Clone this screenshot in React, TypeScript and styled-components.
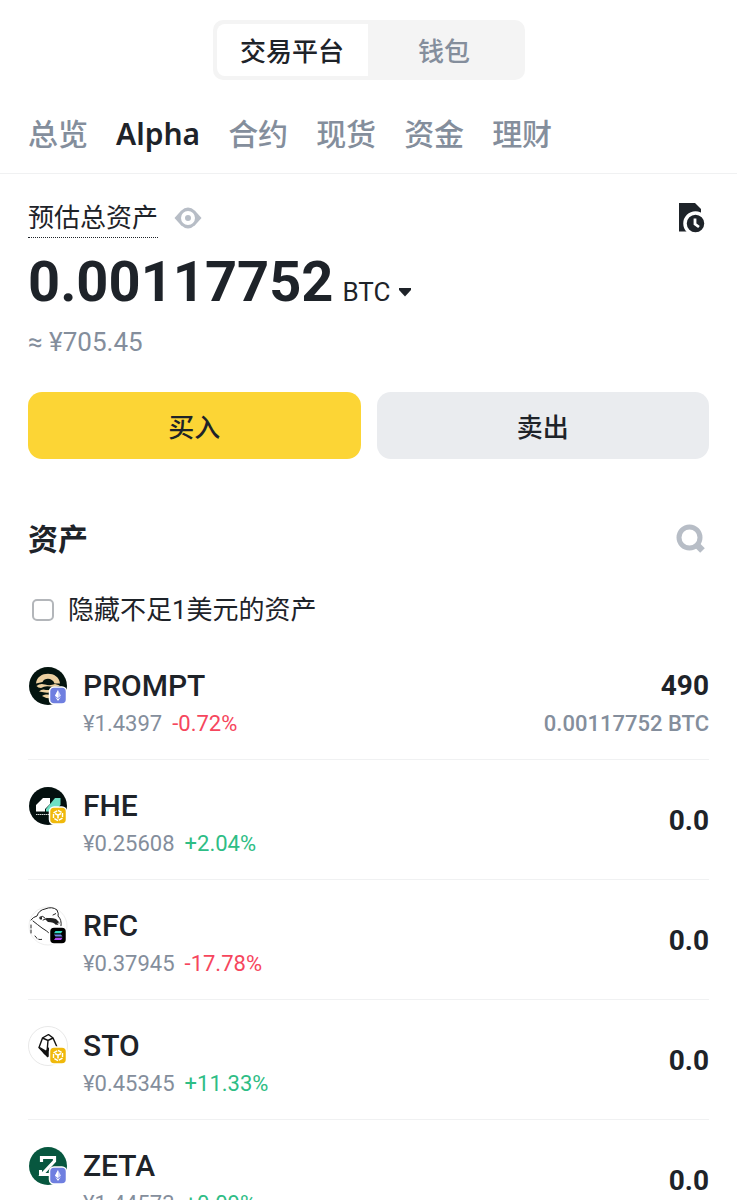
import React from "react";
import styled, { createGlobalStyle } from "styled-components";

const latin = `Roboto, "Noto Sans CJK SC", sans-serif`;
const han = `"Noto Sans CJK SC", sans-serif`;

const color = {
  ink: "#1e2329",
  muted: "#848e9c",
  faint: "#b7bdc6",
  line: "#f0f1f2",
  up: "#2ebd85",
  down: "#f6465d",
};

const GlobalStyle = createGlobalStyle`
  *, *::before, *::after { box-sizing: border-box; }
  body { margin: 0; background: #fff; color: ${color.ink}; font-family: ${latin}; }
  button { border: 0; padding: 0; background: none; color: inherit; font: inherit; cursor: pointer; }
  h1, h2, h3, p, ul { margin: 0; padding: 0; }
  svg { display: block; }
`;

const Page = styled.div`
  height: 100vh;
  overflow-x: hidden;
  overflow-y: auto;
  scrollbar-width: none;
  padding-top: 20px;
`;

const Segments = styled.div`
  display: flex;
  width: 312px;
  height: 60px;
  margin: 0 auto;
  padding: 4px;
  border-radius: 10px;
  background: #f4f4f4;
`;

const Segment = styled.button<{ $active?: boolean }>`
  flex: ${(p) => (p.$active ? "0 0 151px" : "1")};
  border-radius: ${(p) => (p.$active ? "8px 0 0 8px" : "8px")};
  background: ${(p) => (p.$active ? "#fff" : "transparent")};
  color: ${(p) => (p.$active ? color.ink : color.muted)};
  font: 500 26px/40px ${han};
`;

const Tabs = styled.nav`
  display: flex;
  gap: 28px;
  height: 94px;
  padding: 32px 28px 0;
  border-bottom: 1px solid ${color.line};
`;

const Tab = styled.a<{ $active?: boolean }>`
  color: ${(p) => (p.$active ? color.ink : color.muted)};
  font: ${(p) => (p.$active ? 600 : 500)} 30px/44px "Noto Sans", ${han};
  text-decoration: none;
  white-space: nowrap;
`;

const Content = styled.main`
  padding: 24px 28px 0;
`;

const Row = styled.div`
  display: flex;
  align-items: center;
  justify-content: space-between;
`;

const LabelGroup = styled.div`
  display: flex;
  align-items: center;
  gap: 16px;
`;

const BalanceLabel = styled.h1`
  height: 40px;
  border-bottom: 1px dotted ${color.ink};
  font: 400 26px/36px ${han};
`;

const Balance = styled.div`
  display: flex;
  align-items: baseline;
  height: 84px;
  padding-top: 2px;
`;

const Amount = styled.span`
  font-size: 56px;
  font-weight: 700;
  line-height: 84px;
`;

const Currency = styled.button`
  display: flex;
  align-items: center;
  gap: 8px;
  margin-left: 9px;
  font-size: 26px;
  font-weight: 400;
  line-height: 36px;
`;

const Fiat = styled.p`
  color: ${color.muted};
  font-size: 26px;
  line-height: 40px;
`;

const Actions = styled.div`
  display: flex;
  gap: 16px;
  margin-top: 30px;
`;

const Action = styled.button<{ $primary?: boolean }>`
  flex: 1;
  height: 67px;
  border-radius: 14px;
  background: ${(p) => (p.$primary ? "#fcd535" : "#eaecef")};
  font: 500 26px/40px ${han};
`;

const Heading = styled.h2`
  font: 600 30px/44px ${han};
`;

const AssetsHeader = styled(Row)`
  margin-top: 56px;
`;

const HideSmall = styled.label`
  display: flex;
  align-items: center;
  gap: 14px;
  margin-top: 31px;
  padding-left: 4px;
  font: 400 26px/40px ${latin};
`;

const Checkbox = styled.input`
  appearance: none;
  width: 22px;
  height: 22px;
  margin: 0;
  border: 2px solid #b3b6ba;
  border-radius: 5px;
`;

const List = styled.ul`
  margin-top: 10px;
  list-style: none;
`;

const Item = styled.li`
  display: flex;
  height: 120px;
  padding-top: 26px;
  border-bottom: 1px solid ${color.line};
`;

const Coin = styled.div`
  width: 40px;
  height: 40px;
  margin-right: 15px;
`;

const Info = styled.div`
  flex: 1;
  padding-top: 1px;
`;

const Symbol = styled.h3`
  font-size: 30px;
  font-weight: 500;
  line-height: 38px;
`;

const Quote = styled.p`
  display: flex;
  gap: 10px;
  color: ${color.muted};
  font-size: 22px;
  line-height: 38px;
`;

const Change = styled.span<{ $down?: boolean }>`
  color: ${(p) => (p.$down ? color.down : color.up)};
`;

const Holding = styled.div<{ $single: boolean }>`
  padding-top: ${(p) => (p.$single ? "16px" : "1px")};
  text-align: right;
`;

const Quantity = styled.p`
  font-size: 28px;
  font-weight: 700;
  line-height: 38px;
`;

const Value = styled.p`
  color: ${color.muted};
  font-size: 22px;
  font-weight: 500;
  line-height: 38px;
`;

const EyeIcon = () => (
  <svg width="28" height="22" viewBox="0 0 28 22">
    <path fill={color.faint} d="M.5 11 7 3.800Q14-2.600 21 3.800L27.500 11 21 18.200Q14 24.600 7 18.200Z" />
    <circle cx="14" cy="11" r="5" fill={color.faint} stroke="#fff" strokeWidth="4" />
  </svg>
);

const HistoryIcon = () => (
  <svg width="32" height="30" viewBox="0 0 32 30">
    <path fill={color.ink} d="M2 0H18L24 6V28.500H2Z" />
    <circle cx="18.500" cy="20.500" r="10.500" fill={color.ink} stroke="#fff" strokeWidth="3.500" />
    <path d="M18 15.500V21L22 24" fill="none" stroke="#fff" strokeWidth="2.800" />
  </svg>
);

const SearchIcon = () => (
  <svg width="36" height="32" viewBox="0 0 36 32">
    <circle cx="16.500" cy="16.500" r="10.500" fill="none" stroke={color.faint} strokeWidth="5" />
    <path d="M24 24 29.500 29.500" stroke={color.faint} strokeWidth="6.500" />
  </svg>
);

const CaretIcon = () => (
  <svg width="14" height="10" viewBox="0 0 14 10">
    <path d="M1 1H13V3L7 9.500 1 3Z" fill={color.ink} />
  </svg>
);

type Chain = "eth" | "bnb" | "sol";

const ChainBadge = ({ chain }: { chain: Chain }) => (
  <g transform="translate(21.500 21)">
    <rect width="17" height="17" rx="4.500" fill={{ eth: "#6f7fe0", bnb: "#f0b90b", sol: "#000" }[chain]} stroke="#fff" strokeWidth="1.500" />
    {chain === "eth" && (
      <>
        <path d="M8.500 3 11.500 8.800 8.500 11 5.500 8.800Z" fill="#d5dbff" />
        <path d="M5.800 10 8.500 14 11.200 10 8.500 12Z" fill="#fff" />
        <path d="M8.500 3V11L5.500 8.800Z" fill="#fff" />
      </>
    )}
    {chain === "bnb" && (
      <>
        <path d="M8.500 3.300 13 5.900V11.100L8.500 13.700 4 11.100V5.900Z" fill="none" stroke="#fff" strokeWidth="1.400" strokeDasharray="4.200 1" />
        <path d="M5.500 6.500 8.500 8.200 11.500 6.500M8.500 8V11.500" fill="none" stroke="#fff" strokeWidth="1.600" />
      </>
    )}
    {chain === "sol" && (
      <>
        <path d="M6 4H13L11.500 6.200H4.500Z" fill="#35d6c0" />
        <path d="M4.500 7.400H11.500L13 9.600H6Z" fill="#6f8ee8" />
        <path d="M6 10.800H13L11.500 13H4.500Z" fill="#b04cf0" />
      </>
    )}
  </g>
);

const artwork: Record<string, React.ReactNode> = {
  PROMPT: (
    <>
      <circle cx="20" cy="20" r="19" fill="#04140f" />
      <path fill="#ecd0a0" d="M8 17.500C9 4.500 31 4.500 32 17.500H26.500C24.500 11.500 16.500 11.500 14.500 16Z" />
      <path fill="#ecd0a0" d="M8.500 20Q12 17 17 18.500T27 18L32 19.500Q27 21.500 22 20.500T13 22Q10 22 8.500 20Z" />
      <path fill="#ecd0a0" d="M11 25.500Q14 22.500 18 24H24V26Q20 27 17 26.500T11 25.500Z" />
      <path fill="#ecd0a0" d="M14 30Q16 28 19 28.500L23 29V32.500Q18 32.500 14 30Z" />
    </>
  ),
  FHE: (
    <>
      <circle cx="20" cy="20" r="19" fill="#04100f" />
      <path fill="#fff" d="M8 25.500V19L15 12H22V18L17 23V25.500Z" />
      <path fill="#6fe0c4" d="M18 25.500V23L27 12H32.500V19L26 25.500Z" />
      <path d="M8 28.500H23" stroke="#d5dada" strokeWidth="1.200" strokeDasharray="1.500 .5" />
    </>
  ),
  RFC: (
    <>
      <circle cx="20" cy="20" r="19" fill="#fff" stroke="#eee" />
      <g fill="none" stroke="#222" strokeLinecap="round">
        <path d="M3 14Q5 11 9 10 11 4 17 3 24 0 29 4 31 8 30 10 34 14 33 20" />
        <path d="M5 15Q10 19 14 22 19 25 21 27M12 11Q15 9 17 12M15 14Q19 11 22 13" />
        <path d="M25 9 29 7M27 17Q31 20 31 17M3 19V27M7 30Q10 35 15 33" strokeDasharray="3 2" />
      </g>
      <path fill="#222" d="M17 13Q22 11 28 13L31 16 28 19Q26 16 20 16ZM11 11.500 14 11V13.500H12Z" />
    </>
  ),
  STO: (
    <>
      <circle cx="20" cy="20" r="19.500" fill="#fff" stroke="#e8e8e8" />
      <path fill="none" stroke="#111" strokeWidth="1.400" d="M20.500 8.500 25 12 29 21M20.500 8.500 14.500 12 11 21.500 20 31M14.500 12 20 14.500 25 12M20 14.500 19 26" />
      <path fill="#111" d="M11 20.500 18 24.500 21 21V31L16 28Z" />
    </>
  ),
  ZETA: (
    <>
      <circle cx="20" cy="20" r="19" fill="#07573f" />
      <path fill="none" stroke="#fff" strokeWidth="3.200" d="M13.500 16V11.500H26.500V15L14 28.500H26" />
      <path fill="none" stroke="#fff" strokeWidth="3" d="M12.500 24V28.500H22" />
    </>
  ),
};

interface Asset {
  symbol: string;
  chain: Chain;
  price: string;
  change: string;
  quantity: string;
  value?: string;
}

const assets: Asset[] = [
  { symbol: "PROMPT", chain: "eth", price: "¥1.4397", change: "-0.72%", quantity: "490", value: "0.00117752 BTC" },
  { symbol: "FHE", chain: "bnb", price: "¥0.25608", change: "+2.04%", quantity: "0.0" },
  { symbol: "RFC", chain: "sol", price: "¥0.37945", change: "-17.78%", quantity: "0.0" },
  { symbol: "STO", chain: "bnb", price: "¥0.45345", change: "+11.33%", quantity: "0.0" },
  { symbol: "ZETA", chain: "eth", price: "¥1.44573", change: "+0.09%", quantity: "0.0" },
];

const tabs = ["总览", "Alpha", "合约", "现货", "资金", "理财"];

export default function App() {
  return (
    <Page>
      <GlobalStyle />
      <Segments>
        <Segment $active>交易平台</Segment>
        <Segment>钱包</Segment>
      </Segments>
      <Tabs>
        {tabs.map((name) => (
          <Tab key={name} href="#" $active={name === "Alpha"}>{name}</Tab>
        ))}
      </Tabs>
      <Content>
        <Row>
          <LabelGroup>
            <BalanceLabel>预估总资产</BalanceLabel>
            <button aria-label="隐藏余额"><EyeIcon /></button>
          </LabelGroup>
          <button aria-label="历史记录"><HistoryIcon /></button>
        </Row>
        <Balance>
          <Amount>0.00117752</Amount>
          <Currency>BTC<CaretIcon /></Currency>
        </Balance>
        <Fiat>≈ ¥705.45</Fiat>
        <Actions>
          <Action $primary>买入</Action>
          <Action>卖出</Action>
        </Actions>
        <AssetsHeader>
          <Heading>资产</Heading>
          <button aria-label="搜索"><SearchIcon /></button>
        </AssetsHeader>
        <HideSmall>
          <Checkbox type="checkbox" />
          隐藏不足1美元的资产
        </HideSmall>
        <List>
          {assets.map((a) => (
            <Item key={a.symbol}>
              <Coin>
                <svg width="40" height="40" viewBox="0 0 40 40">
                  {artwork[a.symbol]}
                  <ChainBadge chain={a.chain} />
                </svg>
              </Coin>
              <Info>
                <Symbol>{a.symbol}</Symbol>
                <Quote>
                  <span>{a.price}</span>
                  <Change $down={a.change.startsWith("-")}>{a.change}</Change>
                </Quote>
              </Info>
              <Holding $single={!a.value}>
                <Quantity>{a.quantity}</Quantity>
                {a.value && <Value>{a.value}</Value>}
              </Holding>
            </Item>
          ))}
        </List>
      </Content>
    </Page>
  );
}
